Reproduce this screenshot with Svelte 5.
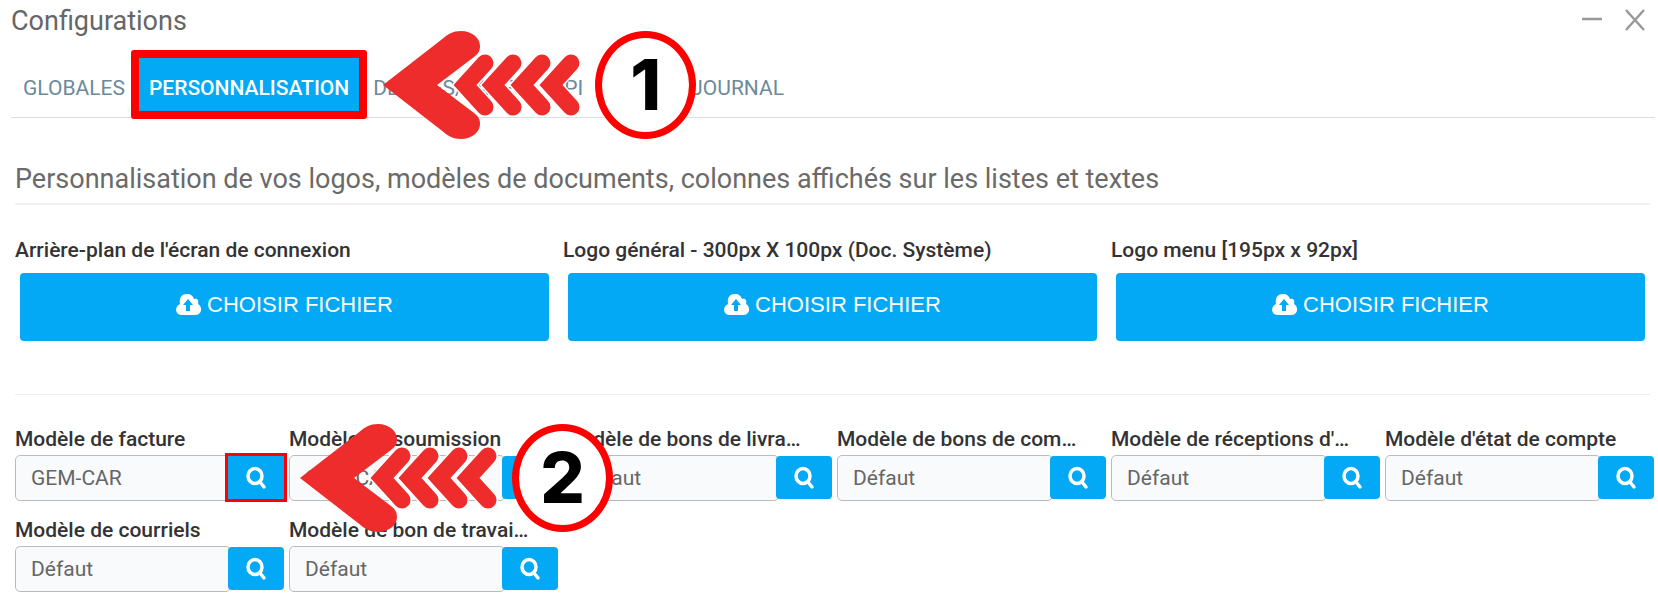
<script>
    const tabs = ["GLOBALES", "PERSONNALISATION", "DEVISES/TAXES", "API", "JOURNAL"];
    let active_tab = $state(1);

    const uploads = [
        "Arrière-plan de l'écran de connexion",
        "Logo général - 300px X 100px (Doc. Système)",
        "Logo menu [195px x 92px]",
    ];

    let templates = $state([
        { id: "invoice", label: "Modèle de facture", value: "GEM-CAR" },
        { id: "quote", label: "Modèle de soumission", value: "GEM-CAR" },
        { id: "delivery", label: "Modèle de bons de livra…", value: "Défaut" },
        { id: "order", label: "Modèle de bons de com…", value: "Défaut" },
        { id: "reception", label: "Modèle de réceptions d'…", value: "Défaut" },
        { id: "statement", label: "Modèle d'état de compte", value: "Défaut" },
        { id: "email", label: "Modèle de courriels", value: "Défaut" },
        { id: "work_order", label: "Modèle de bon de travai…", value: "Défaut" },
    ]);
</script>

{#snippet step(number)}
    <div class="step">
        <svg class="arrow" width="200" height="108" viewBox="0 0 200 108" aria-hidden="true">
            <path class="head" d="M0 54L58 9C65 3 70 0 78 0C89 0 97 7 97 15C97 20 95 23 91 26L54 54L91 82C95 85 97 88 97 93C97 101 89 108 78 108C70 108 65 105 58 99Z" />
            {#each [70, 98, 127, 156] as x}
                <path class="halo" d="M{x + 32} 32L{x + 12} 54L{x + 32} 76" />
                <path class="chevron" d="M{x + 32} 32L{x + 12} 54L{x + 32} 76" />
            {/each}
        </svg>
        <span class="badge">{number}</span>
    </div>
{/snippet}

<div class="window">
    <header class="title_bar">
        <h1>Configurations</h1>
        <div class="window_buttons">
            <button aria-label="Réduire">
                <svg width="22" height="24" viewBox="0 0 22 24"><path d="M1 11H21" /></svg>
            </button>
            <button aria-label="Fermer">
                <svg width="20" height="24" viewBox="0 0 20 24"><path d="M1 2L19 22M19 2L1 22" /></svg>
            </button>
        </div>
    </header>

    <nav class="tabs">
        {#each tabs as tab, i}
            <div class="tab_holder" class:marked={i === 1} class:apart={i === 4}>
                <button class="tab" class:active={i === active_tab} onclick={() => (active_tab = i)}>{tab}</button>
                {#if i === 1}
                    {@render step(1)}
                {/if}
            </div>
        {/each}
    </nav>

    <main>
        <h2>Personnalisation de vos logos, modèles de documents, colonnes affichés sur les listes et textes</h2>

        <section class="uploads">
            {#each uploads as label, i}
                <div class="upload">
                    <span class="label" id="upload_{i}">{label}</span>
                    <button class="upload_button" aria-describedby="upload_{i}">
                        <svg width="25" height="22" viewBox="0 0 25 22" aria-hidden="true">
                            <path fill="#fff" d="M6 21C-1 21-2 13 4 10C3 3 6 0 11 0C15 0 17 2 18 5C22 4 23 7 22 10C27 13 26 21 19 21Z" />
                            <path fill="#03a9f4" d="M12 5L17 11H14V17H10V11H7Z" />
                        </svg>
                        CHOISIR FICHIER
                    </button>
                </div>
            {/each}
        </section>

        <hr>

        <section class="templates">
            {#each templates as template, i}
                <div class="field">
                    <label class="label" for={template.id}>{template.label}</label>
                    <div class="input_group">
                        <input id={template.id} type="text" bind:value={template.value}>
                        <div class="search_holder" class:marked={i === 0}>
                            <button class="search" aria-label="Rechercher : {template.label}">
                                <svg width="20" height="22" viewBox="0 0 20 22" aria-hidden="true">
                                    <ellipse cx="9" cy="9" rx="7" ry="7.5" />
                                    <path d="M14 15L18 20" />
                                </svg>
                            </button>
                            {#if i === 0}
                                {@render step(2)}
                            {/if}
                        </div>
                    </div>
                </div>
            {/each}
        </section>
    </main>
</div>

<style>
    :global(body){
        background: #fff;
    }

    .window{
        font-family: Roboto, "Liberation Sans", sans-serif;
        font-size: 21px;
        color: #333;
        overflow: hidden;
    }

    button{
        font-family: inherit;
        font-size: inherit;
        border: none;
        padding: 0;
        background: none;
        cursor: pointer;
    }

    svg{
        display: block;
        overflow: visible;
    }

    .title_bar{
        display: flex;
        justify-content: space-between;
        padding: 4px 13px 0 11px;
        height: 46px;
    }

    h1{
        margin: 0;
        font-size: 27px;
        font-weight: 400;
        line-height: 34px;
        color: #666;
    }

    .window_buttons{
        display: flex;
        align-items: flex-start;
        gap: 22px;
        padding-top: 4px;
    }

    .window_buttons path{
        stroke: #999;
        stroke-width: 2.5;
        fill: none;
    }

    .tabs{
        display: flex;
        align-items: flex-start;
        height: 67px;
        margin: 0 3px 0 11px;
        border-bottom: 1px solid #ddd;
    }

    .tab_holder{
        position: relative;
        margin-top: 8px;
    }

    .tab_holder.apart{
        margin-left: 84px;
    }

    .tab{
        display: block;
        height: 53px;
        padding: 6px 12px 0;
        color: #6b8a9a;
    }

    .tab.active{
        padding: 6px 10px 0;
        background: #03a9f4;
        color: #fff;
        font-weight: 500;
    }

    .tab_holder.marked{
        margin: 0 -6px;
        border: 8px solid #f00;
        border-radius: 3px;
    }

    .step{
        position: absolute;
        z-index: 2;
        top: 50%;
        display: flex;
        align-items: center;
        transform: translateY(-50%);
        pointer-events: none;
    }

    .tab_holder .step{
        left: calc(100% + 24px);
    }

    .search_holder .step{
        left: calc(100% + 16px);
    }

    .head{
        fill: #ee2c2c;
    }

    .halo,
    .chevron{
        fill: none;
        stroke: #ee2c2c;
        stroke-width: 17;
        stroke-linecap: round;
    }

    .halo{
        stroke: #fff;
        stroke-width: 20;
    }

    .badge{
        flex: none;
        box-sizing: border-box;
        width: 101px;
        height: 108px;
        margin-left: 12px;
        border: 7px solid #f00;
        border-radius: 50%;
        background: #fff;
        color: #000;
        font: 800 70px/94px Inter, "Liberation Sans", sans-serif;
        text-align: center;
    }

    main{
        padding: 0 8px 0 15px;
    }

    h2{
        margin: 43px 0 0;
        padding-bottom: 6px;
        border-bottom: 2px solid #f2f2f2;
        font-size: 27px;
        font-weight: 400;
        line-height: 36px;
        color: #6a6a6a;
    }

    .uploads{
        display: grid;
        grid-template-columns: repeat(3, 1fr);
        margin-right: -9px;
        padding: 31px 0 53px;
    }

    .label{
        display: block;
        font-weight: 500;
        line-height: 28px;
        white-space: nowrap;
    }

    .upload_button{
        display: flex;
        align-items: center;
        justify-content: center;
        gap: 6px;
        width: calc(100% - 19px);
        height: 68px;
        margin: 9px 0 0 5px;
        padding-bottom: 4px;
        border-radius: 4px;
        background: #03a9f4;
        color: #fff;
        font: 22px "Liberation Sans", sans-serif;
    }

    hr{
        margin: 0;
        border: none;
        border-top: 1px solid #eee;
    }

    .templates{
        display: grid;
        grid-template-columns: repeat(6, 1fr);
        row-gap: 15px;
        margin-right: -9px;
        padding-top: 30px;
    }

    .field{
        min-width: 0;
    }

    .input_group{
        display: flex;
        height: 46px;
        margin: 2px 5px 0 0;
    }

    input{
        box-sizing: border-box;
        flex: 1;
        min-width: 0;
        padding: 0 15px;
        border: 1px solid #bbb;
        border-radius: 5px;
        background: #f8fafc;
        color: #666;
        font: inherit;
    }

    .search_holder{
        position: relative;
        width: 56px;
        height: 43px;
        margin: 1px 0 0 -3px;
    }

    .search{
        display: flex;
        align-items: center;
        justify-content: center;
        width: 100%;
        height: 100%;
        border-radius: 4px;
        background: #03a9f4;
    }

    .search_holder.marked .search{
        outline: 3px solid #f00;
        border-radius: 0;
    }

    .search svg{
        fill: none;
        stroke: #fff;
        stroke-width: 3.5;
        stroke-linecap: round;
    }
</style>
